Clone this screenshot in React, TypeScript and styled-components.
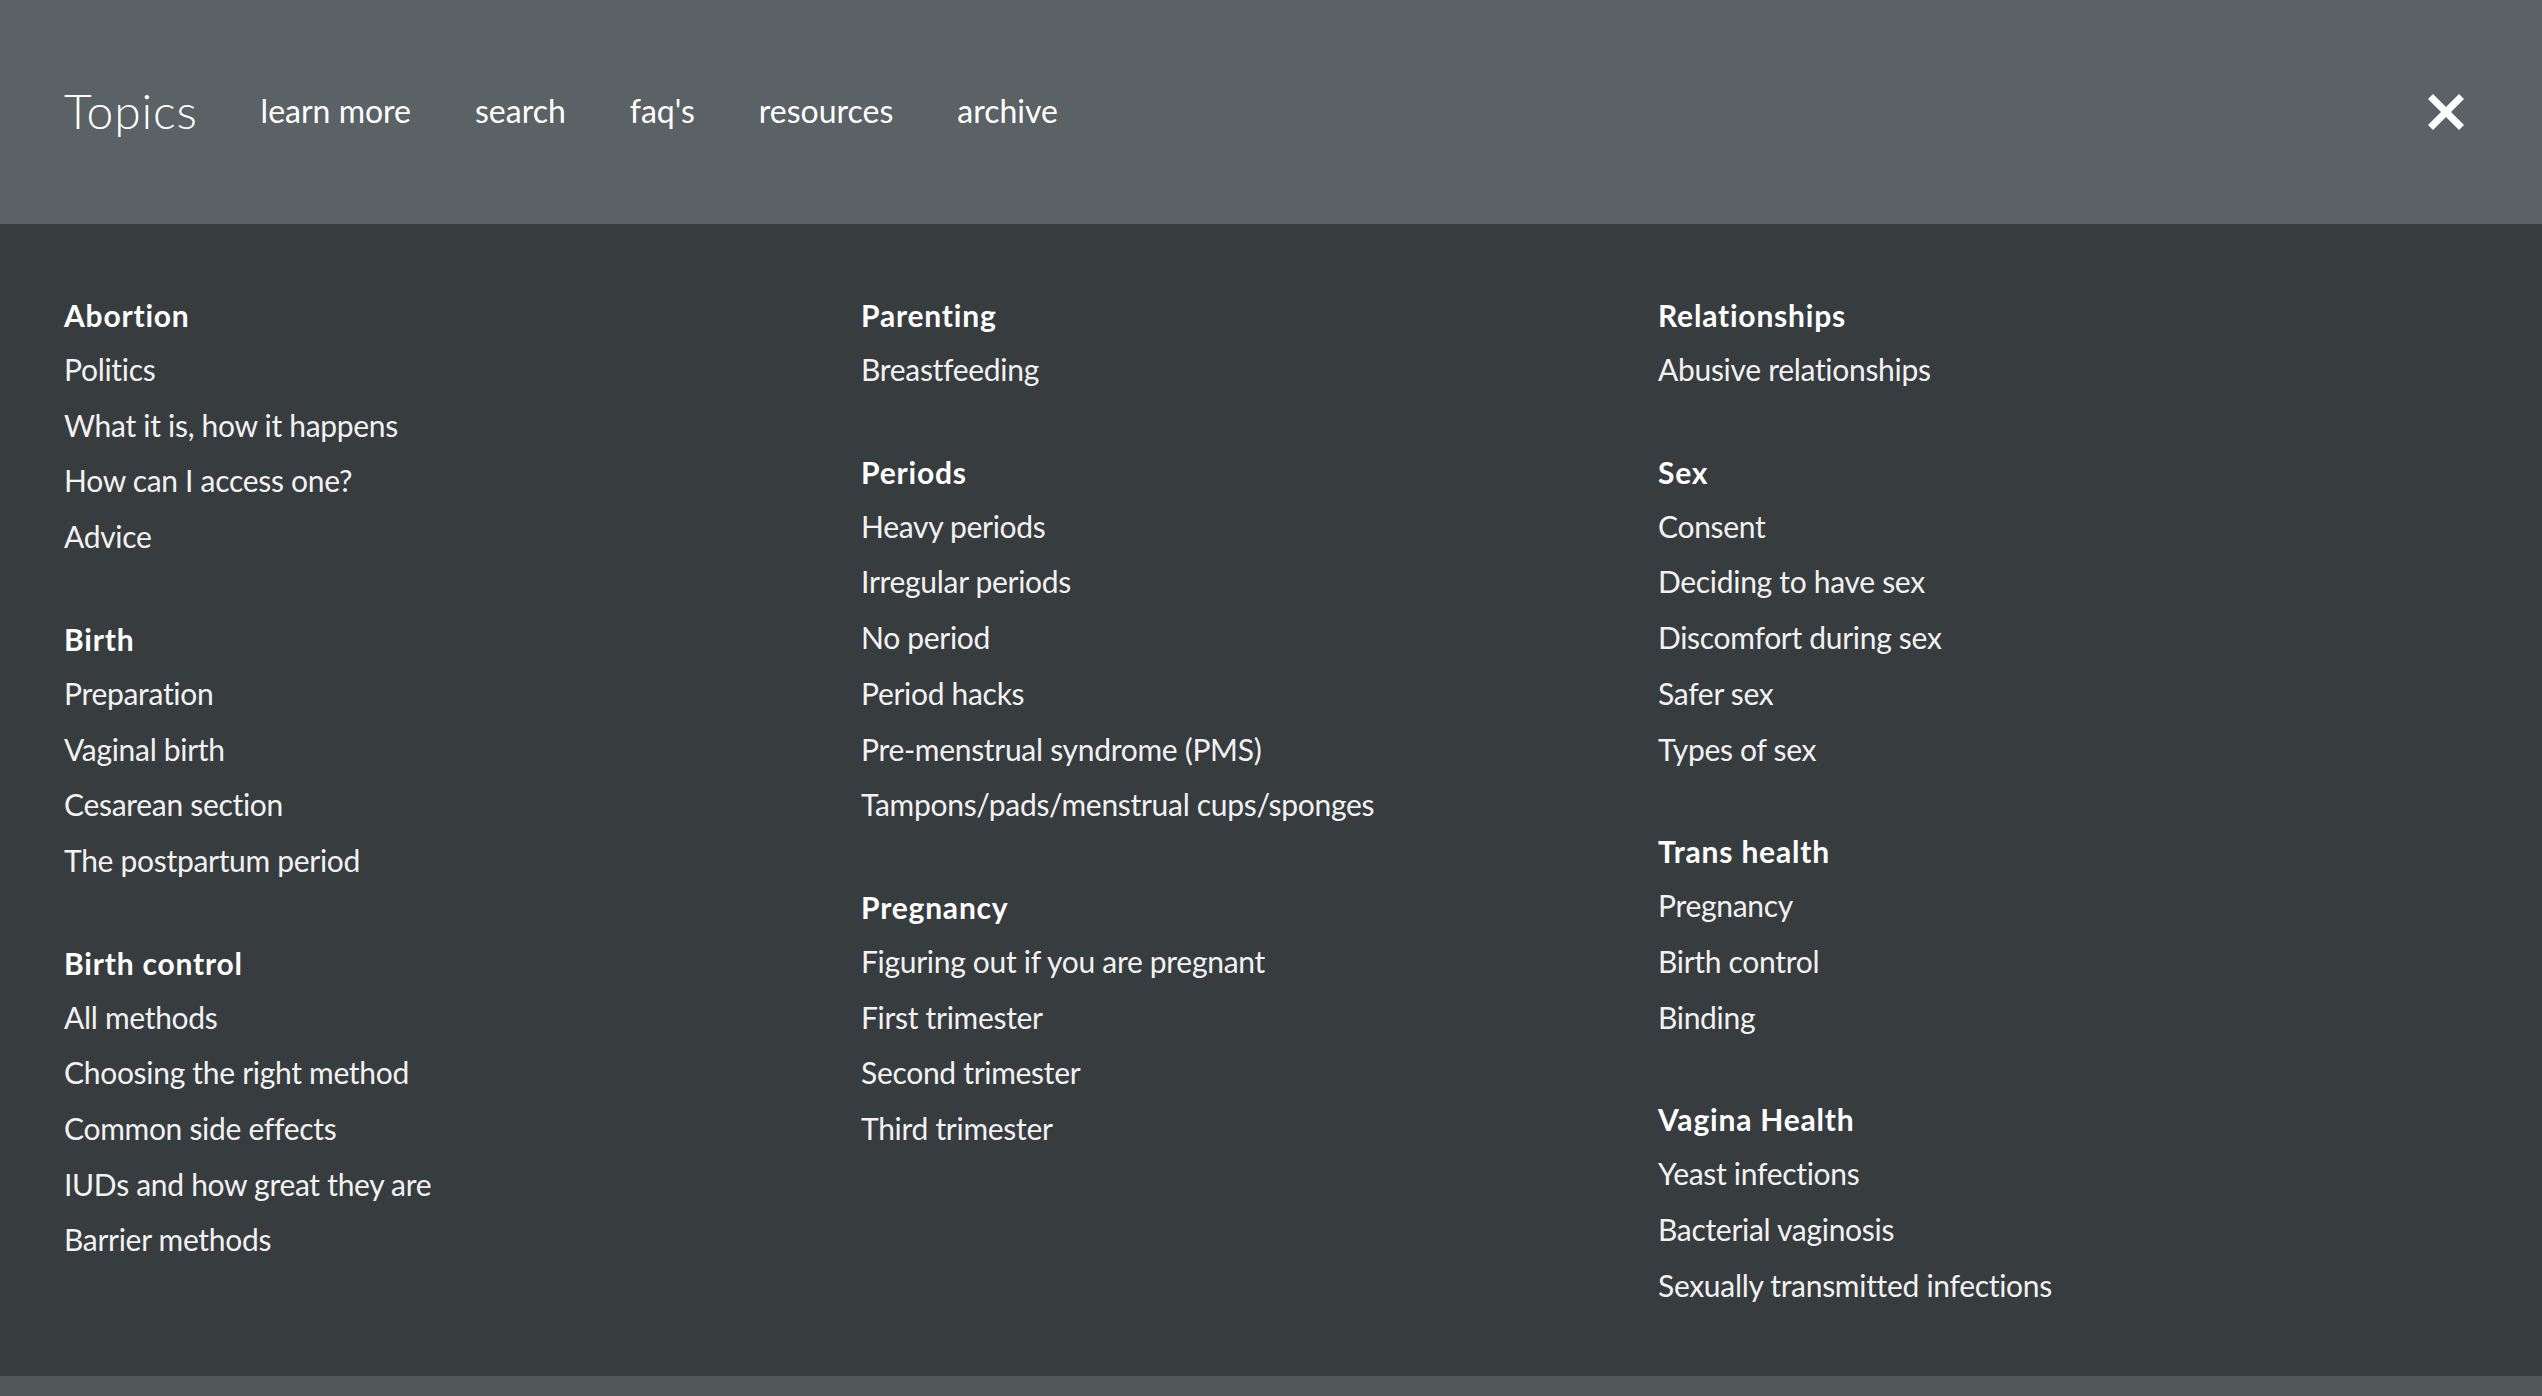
import React from "react";
import styled, { createGlobalStyle } from "styled-components";

const GlobalStyle = createGlobalStyle`
  html, body {
    margin: 0;
    padding: 0;
    background: #52575a;
  }
  body {
    font-family: Lato, "Noto Sans", "Liberation Sans", sans-serif;
    color: #fff;
  }
  * { box-sizing: border-box; }
`;

const Overlay = styled.div`
  height: 1376px;
  display: flex;
  flex-direction: column;
  background: #373c3f;
`;

const Header = styled.header`
  height: 224px;
  flex: 0 0 auto;
  background: #5a6265;
  display: flex;
  align-items: center;
  padding: 0 78px 0 64px;
`;

const Title = styled.h1`
  margin: 0 63px 0 0;
  font-size: 48px;
  font-weight: 300;
  letter-spacing: 0.8px;
  line-height: 1;
  color: #fff;
  position: relative;
  top: -1px;
`;

const Nav = styled.nav`
  display: flex;
  gap: 64px;
  position: relative;
  top: -1px;
`;

const NavLink = styled.a`
  font-size: 32px;
  font-weight: 400;
  color: #fff;
  text-decoration: none;
  line-height: 1;
  cursor: pointer;
`;

const CloseButton = styled.button`
  margin-left: auto;
  width: 36px;
  height: 36px;
  padding: 0;
  border: 0;
  background: transparent;
  display: flex;
  align-items: center;
  justify-content: center;
  cursor: pointer;
`;

const Body = styled.main`
  flex: 1 1 auto;
  padding: 65px 0 0 64px;
  display: grid;
  grid-template-columns: repeat(3, 797px);
  align-content: start;
`;

const Column = styled.div`
  display: flex;
  flex-direction: column;
  gap: 48px;
`;

const Section = styled.section`
  display: flex;
  flex-direction: column;
`;

const Heading = styled.h2`
  margin: 0;
  padding-bottom: 1px;
  font-size: 30px;
  font-weight: 700;
  letter-spacing: 0.8px;
  line-height: 52px;
  color: #fff;
`;

const Item = styled.a`
  display: block;
  font-size: 30px;
  font-weight: 400;
  letter-spacing: -0.3px;
  line-height: 55.7px;
  color: #f2f2f2;
  text-decoration: none;
  cursor: pointer;
`;

type Topic = { title: string; items: string[] };

const columns: Topic[][] = [
  [
    {
      title: "Abortion",
      items: ["Politics", "What it is, how it happens", "How can I access one?", "Advice"],
    },
    {
      title: "Birth",
      items: ["Preparation", "Vaginal birth", "Cesarean section", "The postpartum period"],
    },
    {
      title: "Birth control",
      items: [
        "All methods",
        "Choosing the right method",
        "Common side effects",
        "IUDs and how great they are",
        "Barrier methods",
      ],
    },
  ],
  [
    { title: "Parenting", items: ["Breastfeeding"] },
    {
      title: "Periods",
      items: [
        "Heavy periods",
        "Irregular periods",
        "No period",
        "Period hacks",
        "Pre-menstrual syndrome (PMS)",
        "Tampons/pads/menstrual cups/sponges",
      ],
    },
    {
      title: "Pregnancy",
      items: ["Figuring out if you are pregnant", "First trimester", "Second trimester", "Third trimester"],
    },
  ],
  [
    { title: "Relationships", items: ["Abusive relationships"] },
    {
      title: "Sex",
      items: ["Consent", "Deciding to have sex", "Discomfort during sex", "Safer sex", "Types of sex"],
    },
    { title: "Trans health", items: ["Pregnancy", "Birth control", "Binding"] },
    {
      title: "Vagina Health",
      items: ["Yeast infections", "Bacterial vaginosis", "Sexually transmitted infections"],
    },
  ],
];

const navItems = ["learn more", "search", "faq's", "resources", "archive"];

const CloseIcon = () => (
  <svg width="36" height="36" viewBox="0 0 36 36" aria-hidden="true">
    <g stroke="#fff" strokeWidth="7" strokeLinecap="butt">
      <line x1="2.5" y1="2.5" x2="33.5" y2="33.5" />
      <line x1="33.5" y1="2.5" x2="2.5" y2="33.5" />
    </g>
  </svg>
);

export default function App() {
  return (
    <>
      <GlobalStyle />
      <Overlay>
        <Header>
          <Title>Topics</Title>
          <Nav>
            {navItems.map((n) => (
              <NavLink key={n}>{n}</NavLink>
            ))}
          </Nav>
          <CloseButton aria-label="Close">
            <CloseIcon />
          </CloseButton>
        </Header>
        <Body>
          {columns.map((col, i) => (
            <Column key={i}>
              {col.map((t) => (
                <Section key={t.title}>
                  <Heading>{t.title}</Heading>
                  {t.items.map((it) => (
                    <Item key={it}>{it}</Item>
                  ))}
                </Section>
              ))}
            </Column>
          ))}
        </Body>
      </Overlay>
    </>
  );
}
